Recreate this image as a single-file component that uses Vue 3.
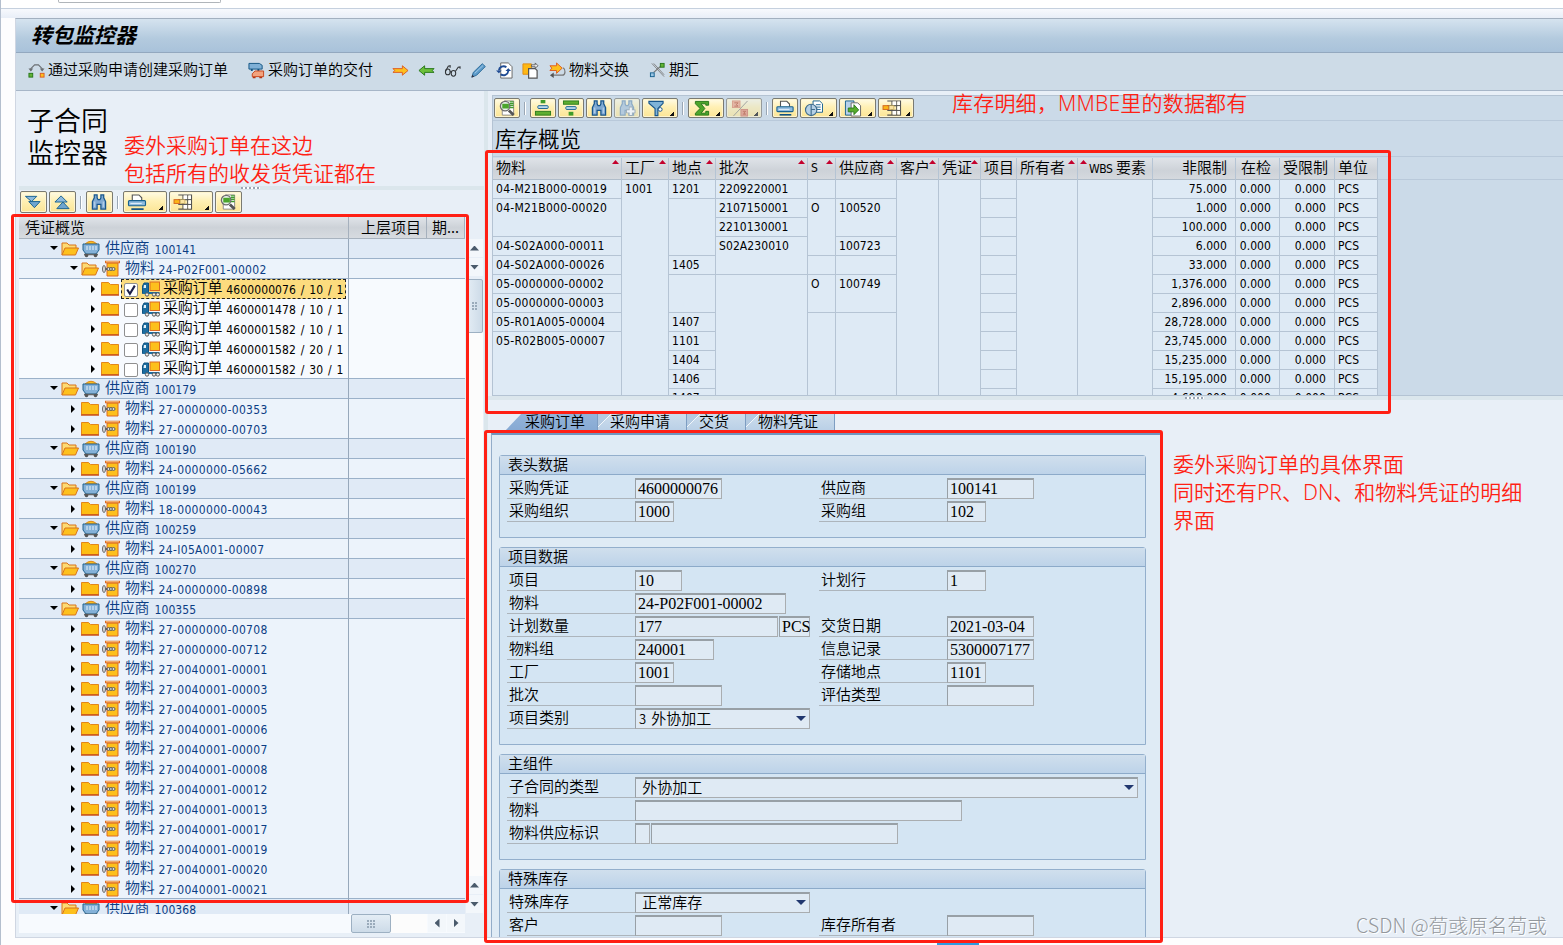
<template>
  <div class="screen">
    <!-- shared icon shapes -->
    <svg class="defs" width="0" height="0">
      <symbol id="i-find" viewBox="0 0 18 18">
        <path d="M6 1h10v15H4V9" fill="#fff" stroke="#8a8a8a" />
        <path d="M12 2h4M12 4h4M12 6h4M12 8h4" stroke="#3f9c2a" stroke-width="1.4" />
        <circle cx="7" cy="6.5" r="5" fill="#e9f3ea" stroke="#6d6d6d" stroke-width="1.4" />
        <rect x="4" y="4" width="7" height="5" fill="#4aa52c" />
        <path d="M11 11l5 5" stroke="#555" stroke-width="3" />
      </symbol>
      <symbol id="i-asc" viewBox="0 0 18 18">
        <rect x="6.5" y="0" width="5" height="3.5" fill="#3f9c2a" />
        <rect x="3.5" y="6" width="11" height="3" rx="1" fill="#b9d8ee" stroke="#17618f" />
        <rect x="1" y="12" width="16" height="4" fill="#5fae2f" stroke="#2c7d1d" />
      </symbol>
      <symbol id="i-desc" viewBox="0 0 18 18">
        <rect x="1" y="1" width="16" height="3.5" fill="#5fae2f" stroke="#2c7d1d" />
        <rect x="3.5" y="7" width="11" height="3" rx="1" fill="#b9d8ee" stroke="#17618f" />
        <rect x="6.5" y="12.5" width="5" height="4" fill="#3f9c2a" />
      </symbol>
      <symbol id="i-bino" viewBox="0 0 18 18">
        <path d="M4 1h3v3l1 2h2l1-2V1h3v3l2 4v8h-5v-5H7v5H2V8l2-4z" fill="#7fa9d2" stroke="#17558c" stroke-width="1.3" />
        <path d="M4.5 8v6M13.5 8v6" stroke="#c3dbf0" />
      </symbol>
      <symbol id="i-binoplus" viewBox="0 0 18 18">
        <path d="M4 1h3v3l1 2h2l1-2V1h3v3l2 4v8h-5v-5H7v5H2V8l2-4z" fill="#a9c3d8" stroke="#6c93b3" stroke-width="1.3" />
        <path d="M13 7v10M8 12h10" stroke="#8796a0" stroke-width="4" />
        <path d="M13 8v8M9 12h8" stroke="#fff" stroke-width="2.4" />
      </symbol>
      <symbol id="i-filter" viewBox="0 0 18 18">
        <path d="M1.5 1.5h15v2L11 9v7.5H8V9L1.5 3.5z" fill="#7fb3d8" stroke="#17558c" stroke-width="1.2" />
        <circle cx="13.5" cy="10" r="2" fill="#fff" stroke="#17558c" />
      </symbol>
      <symbol id="i-sum" viewBox="0 0 18 18">
        <path d="M2 1.5h14v4h-3V4H8l4 5-4 5h5v-2h3v4H2v-2l5-5-5-5z" fill="#4ea52b" stroke="#23761a" />
      </symbol>
      <symbol id="i-sub" viewBox="0 0 18 18">
        <rect x="1" y="1" width="8" height="7" fill="#f2a584" stroke="#e0845f" />
        <rect x="10" y="10" width="7" height="7" fill="#e88f72" stroke="#cf6f55" />
        <path d="M3 3h4L5 5l2 1.5H3M12 12h3l-2 2 2 1h-3" stroke="#b94a28" fill="none" />
        <path d="M17 1L2 17" stroke="#85857a" />
      </symbol>
      <symbol id="i-print" viewBox="0 0 20 18">
        <path d="M5 7V1h7l3 3v3" fill="#fff" stroke="#555" stroke-width="1.2" />
        <rect x="1" y="7" width="18" height="5.5" rx="1" fill="#8fbbdf" stroke="#17618f" stroke-width="1.2" />
        <path d="M3 10h12" stroke="#e6f2fb" />
        <path d="M4 16h13" stroke="#0f5285" stroke-width="1.8" />
      </symbol>
      <symbol id="i-views" viewBox="0 0 20 18">
        <path d="M9 1h7l3 3v9H9z" fill="#fff" stroke="#17618f" />
        <path d="M12 5h5M12 7.5h5M12 10h5" stroke="#17618f" />
        <circle cx="7" cy="10.5" r="6" fill="#b5d0e6" stroke="#3f6b8c" stroke-width="1.2" />
        <path d="M7 4.5v12M7 10h4" fill="none" stroke="#3f6b8c" stroke-width="1.2" />
      </symbol>
      <symbol id="i-export" viewBox="0 0 20 18">
        <path d="M2 1h9v15H2z" fill="#b8d1ea" stroke="#17618f" />
        <path d="M8 3h7l3 3v11H8z" fill="#fff" stroke="#666" />
        <path d="M5 8.5h6V5l5 5.5-5 5v-3H5z" fill="#58ac2c" stroke="#2a7a1c" />
      </symbol>
      <symbol id="i-layout" viewBox="0 0 20 18">
        <path d="M5 1h14v15H5M5 6h14M5 11h14M10 1v15M15 1v15" fill="none" stroke="#555" stroke-width="1.2" />
        <rect x="10.6" y="1.6" width="3.8" height="3.8" fill="#fff" />
        <rect x="15.6" y="1.6" width="2.8" height="3.8" fill="#fff" />
        <rect x="15.6" y="6.6" width="2.8" height="3.8" fill="#fff" />
        <rect x="10.6" y="11.6" width="3.8" height="3.8" fill="#fff" />
        <rect x="15.6" y="11.6" width="2.8" height="3.8" fill="#fff" />
        <rect x=".5" y="6" width="6" height="4" fill="#fbb616" stroke="#d4661f" />
        <rect x="7" y="6" width="5" height="4" fill="#fbe3a0" stroke="#b89d4d" stroke-width=".6" />
      </symbol>
      <symbol id="i-expand" viewBox="0 0 18 18">
        <path d="M1 2.5h12L7.5 8z" fill="#8db9dd" stroke="#17618f" />
        <path d="M4.500 8h12l-6 6.500z" fill="#6fa5cf" stroke="#17618f" />
      </symbol>
      <symbol id="i-collapse" viewBox="0 0 18 18">
        <path d="M1.500 8.500h13L8 2z" fill="#8db9dd" stroke="#17618f" />
        <path d="M3.500 15.500h13L10 8.500z" fill="#6fa5cf" stroke="#17618f" />
      </symbol>
      <symbol id="i-create" viewBox="0 0 18 18">
        <path d="M3 9V7l4-4h4l4 4v2" fill="none" stroke="#6b6f73" stroke-width="1.2" />
        <path d="M.5 7h5L3 10zM12.500 7h5L15 10z" fill="#6b6f73" />
        <rect x="1" y="12" width="4" height="4" fill="#62b235" stroke="#26761a" />
        <rect x="13" y="12" width="4" height="4" fill="#fdc01d" stroke="#dd5b22" />
      </symbol>
      <symbol id="i-deliver" viewBox="0 0 18 18">
        <path d="M1 1.500h11l3 2v4H1z" fill="#7fb0d6" stroke="#125483" />
        <path d="M3 8.500h2M10 8.500h2" stroke="#125483" stroke-width="2" />
        <path d="M16.500 9.500h-9l-3 3v3h12z" fill="#f2a27d" stroke="#c7431b" />
        <path d="M5 16.500h3M12 16.500h3" stroke="#b53412" stroke-width="1.5" />
      </symbol>
      <symbol id="i-right" viewBox="0 0 18 18">
        <path d="M1 7h10V4l6 5-6 5v-3H1l2-2z" fill="#fdc01d" stroke="#dd5b22" />
      </symbol>
      <symbol id="i-left" viewBox="0 0 18 18">
        <path d="M17 7H7V4L1 9l6 5v-3h10l-2-2z" fill="#6cc03a" stroke="#26761a" />
      </symbol>
      <symbol id="i-glasses" viewBox="0 0 18 18">
        <g fill="none" stroke="#2f3336" stroke-width="1.1">
          <ellipse cx="4" cy="10.500" rx="2.500" ry="3" />
          <ellipse cx="10" cy="12" rx="2.400" ry="3" />
          <path d="M1.500 10L4.500 4.500l2-.5v2M12 10l3-4.500 2-.3v2M6.500 10l1.500 1" />
        </g>
      </symbol>
      <symbol id="i-pencil" viewBox="0 0 18 18">
        <path d="M2 16l1.500-5L13 1.800l3.200 3L7 14z" fill="#5d9bcb" stroke="#2c6a97" />
        <path d="M5 12l9-8.500" stroke="#a5cbe6" />
        <path d="M1.500 16.500l1-3 2 2z" fill="#334" />
      </symbol>
      <symbol id="i-refresh" viewBox="0 0 18 18">
        <path d="M5 1h8l4 4v12H5z" fill="#fff" stroke="#666" />
        <path d="M3 9a5 5 0 0 1 8-3.500M13 9.500a5 5 0 0 1-8 3.500" fill="none" stroke="#1f4b93" stroke-width="2" />
        <path d="M0 9h6L3 12zM10 9.500h6L13 6.500z" fill="#1f4b93" />
      </symbol>
      <symbol id="i-copy" viewBox="0 0 18 18">
        <path d="M1 2h9v11H1z" fill="#fdb813" stroke="#e08a14" />
        <path d="M7 7h7l2 2v8H7z" fill="#fff" stroke="#555" stroke-width="1.3" />
        <path d="M10 5V3h4V1l3 3-3 2.500V5z" fill="#eee" stroke="#555" stroke-width=".9" />
      </symbol>
      <symbol id="i-exchange" viewBox="0 0 18 18">
        <path d="M1 4h7V1l6 5.500L8 12V9H1l2-2.500z" fill="#fdc01d" stroke="#dd5b22" />
        <path d="M15 6c3 2 2.500 8-1 8H3" fill="none" stroke="#777" stroke-width="1.3" />
        <path d="M1 14l4-3v6z" fill="#555" />
      </symbol>
      <symbol id="i-term" viewBox="0 0 18 18">
        <path d="M3 1.500l13 14M5 1.500l11 12" stroke="#777" stroke-width=".9" />
        <path d="M5 11l8-7" stroke="#777" stroke-width="1.3" />
        <rect x="12" y="1.500" width="4" height="4" fill="#62b235" stroke="#26761a" />
        <rect x="1.500" y="11.500" width="4" height="4" fill="#9ac5e4" stroke="#17618f" />
      </symbol>
      <symbol id="i-open" viewBox="0 0 18 16">
        <path d="M1 14V2h5l2 2h7v3" fill="#fddb74" stroke="#d8741d" />
        <path d="M1 14L4 7h13.500l-3 7z" fill="#fdc01d" stroke="#d8741d" />
      </symbol>
      <symbol id="i-folder" viewBox="0 0 18 16">
        <path d="M.5 13.500v-12h7l2 2h8v10z" fill="#fdbe14" stroke="#e3861b" />
        <path d="M0 14h18" stroke="#c9501b" stroke-width="1.5" />
      </symbol>
      <symbol id="i-vendor" viewBox="0 0 18 18">
        <path d="M3 4q6-5.500 12 0z" fill="#fdc01d" stroke="#e08a14" />
        <path d="M1 4h16v6l-3 4H4l-3-4z" fill="#84b1d8" stroke="#20628f" />
        <path d="M5 6v4M8 6v4M11 6v4M14 6v4" stroke="#e8f3fb" />
        <path d="M2 14.500h14" stroke="#666" stroke-width="1.5" />
        <circle cx="4.500" cy="15.500" r="1.8" fill="#555" />
        <circle cx="13.500" cy="15.500" r="1.8" fill="#555" />
      </symbol>
      <symbol id="i-material" viewBox="0 0 18 18">
        <path d="M5 3h11v13H5z" fill="#fdc01d" stroke="#dd6a22" />
        <path d="M3 2h15" stroke="#dd6a22" stroke-width="2.5" />
        <path d="M4 1.800h13" stroke="#fbc98c" />
        <ellipse cx="2" cy="9" rx="1.500" ry="3.500" fill="#ddd" stroke="#666" />
        <path d="M3 9h3" stroke="#666" stroke-width="2" />
        <g fill="#ddd" stroke="#555" stroke-width=".9">
          <circle cx="6.500" cy="9" r="1.500" />
          <circle cx="9" cy="9" r="1.500" />
          <circle cx="11.500" cy="9" r="1.500" />
        </g>
      </symbol>
      <symbol id="i-truck" viewBox="0 0 18 16">
        <rect x="8" y="1" width="9.500" height="8.500" fill="#fdc01d" stroke="#dd6a22" />
        <path d="M.5 12.500V5L2 2h4.500v10.500z" fill="#1d6c9f" stroke="#0f5280" />
        <path d="M2 4h2v3H1.500z" fill="#e3f1fa" />
        <path d="M1 12h16.500" stroke="#1d6c9f" stroke-width="2" />
        <g fill="#eee" stroke="#555">
          <circle cx="5" cy="13.500" r="1.700" />
          <circle cx="12" cy="13.500" r="1.700" />
          <circle cx="15.800" cy="13.500" r="1.700" />
        </g>
      </symbol>
    </svg>

    <div class="strip"><div class="cmd-field"></div></div>

    <div class="window">
      <div class="title-bar">转包监控器</div>
      <div class="app-bar">
        <span v-for="(b, i) in appButtons" :key="i" class="app-button" :style="{ width: b.w + 'px' }">
          <svg width="17" height="17"><use :href="'#i-' + b.icon" /></svg>
          <span v-if="b.label">{{ b.label }}</span>
        </span>
      </div>

      <div class="body">
        <div class="left">
          <div class="left-title"><div>子合同</div><div>监控器</div></div>
          <div class="h-split"><i class="grip"></i></div>
          <div class="tools left-tools">
            <template v-for="(b, i) in treeTools" :key="i">
              <i v-if="b.sep" class="sep"></i>
              <span v-else class="tool" :class="{ off: b.off }" :style="{ width: b.w + 'px' }">
                <svg :width="b.w > 30 ? 20 : 18" height="17"><use :href="'#i-' + b.icon" /></svg>
                <i v-if="b.w > 30" class="drop"></i>
              </span>
            </template>
          </div>
          <div class="tree-area">
            <div class="tree">
              <div class="tree-head">
                <span class="c1">凭证概览</span><span class="c2">上层项目</span><span class="c3">期...</span>
              </div>
              <div class="tree-body">
                <div v-for="(n, i) in nodes" :key="i" class="node" :class="['lv' + n.level, { line: hasLine(i) }]">
                  <div class="node-main" :class="{ selected: n.checked }">
                    <i class="arrow" :class="{ down: n.open }"></i>
                    <svg class="fold" width="18" height="16"><use :href="n.open ? '#i-open' : '#i-folder'" /></svg>
                    <span class="pick">
                      <span v-if="n.level === 2" class="check">
                        <svg v-if="n.checked" width="12" height="12" viewBox="0 0 11 11"><path d="M2 5l2.500 4L9 1.500" fill="none" stroke="#1b1f4a" stroke-width="1.9" /></svg>
                      </span>
                      <svg width="18" height="18"><use :href="'#i-' + kinds[n.level].icon" /></svg>
                      <span class="kind">{{ kinds[n.level].name }}</span>
                      <span class="node-id">{{ n.id }}</span>
                    </span>
                  </div>
                </div>
              </div>
              <div class="hscroll">
                <i class="thumb-h"></i><i class="rail"></i>
                <i class="sb"><b class="tri l"></b></i><i class="sb"><b class="tri r"></b></i>
              </div>
            </div>
            <div class="vscroll">
              <i class="sb"><b class="tri u"></b></i><i class="sb"><b class="tri d"></b></i>
              <i class="thumb-v"></i>
              <i class="rail-v"></i>
              <i class="sb"><b class="tri u"></b></i><i class="sb"><b class="tri d"></b></i>
            </div>
          </div>
        </div>

        <div class="v-split"></div>

        <div class="right">
          <div class="alv">
            <div class="tools alv-tools">
              <template v-for="(b, i) in alvTools" :key="i">
                <i v-if="b.sep" class="sep"></i>
                <span v-else class="tool" :class="{ off: b.off }" :style="{ width: b.w + 'px' }">
                  <svg :width="b.w > 30 ? 20 : 18" height="17"><use :href="'#i-' + b.icon" /></svg>
                  <i v-if="b.w > 30" class="drop"></i>
                </span>
              </template>
            </div>
            <div class="alv-title">库存概览</div>
            <div class="grid">
              <div v-for="c in columns" :key="c.name" class="col" :class="{ amount: c.right, material: c.material }" :style="{ width: c.w + 'px' }">
                <div class="th" :class="{ latin: c.name === 'S' }">
                  <span v-if="c.name === 'WBS'"><small>WBS</small> 要素</span>
                  <span v-else>{{ c.name }}</span>
                  <i v-if="c.sort" class="sort" :class="c.sort"></i>
                </div>
                <div v-for="(cell, j) in c.cells" :key="j" class="td" :style="{ height: cell[1] * 19 + 'px' }">{{ cell[0] }}</div>
              </div>
              <div class="grid-rest"><div class="rest-head"></div></div>
            </div>
          </div>
          <div class="h-split wide"><i class="grip"></i></div>

          <div class="tabs">
            <span v-for="(t, i) in tabs" :key="t.name" class="tab" :class="{ active: i === 0 }" :style="{ width: t.w + 'px' }">{{ t.name }}</span>
          </div>
          <div class="panel">
            <div v-for="g in groups" :key="g.title" class="group">
              <div class="group-title">{{ g.title }}</div>
              <div v-for="(r, i) in g.rows" :key="i" class="frow">
                <div v-for="(f, k) in r" :key="k" class="half">
                  <template v-if="f">
                    <span class="label">{{ f.label }}</span>
                    <span v-for="(x, m) in f.fields" :key="m" class="field" :class="{ select: x.select }" :style="{ width: x.w + 'px' }"><small v-if="x.pre">{{ x.pre }}</small>{{ x.v }}</span>
                  </template>
                </div>
              </div>
            </div>
          </div>
        </div>
      </div>
    </div>

    <!-- annotations drawn over the window -->
    <div class="box box-tree"></div>
    <div class="box box-grid"></div>
    <div class="box box-form"></div>
    <div class="note note-tree">委外采购订单在这边<br>包括所有的收发货凭证都在</div>
    <div class="note note-grid">库存明细，MMBE里的数据都有</div>
    <div class="note note-form">委外采购订单的具体界面<br>同时还有PR、DN、和物料凭证的明细<br>界面</div>
    <div class="task-hint"></div>
    <div class="watermark">CSDN @荀彧原名苟或</div>
  </div>
</template>

<script setup>
const appButtons = [
  { icon: 'create', label: '通过采购申请创建采购订单', w: 220 },
  { icon: 'deliver', label: '采购订单的交付', w: 144 },
  { icon: 'right', w: 26 },
  { icon: 'left', w: 26 },
  { icon: 'glasses', w: 26 },
  { icon: 'pencil', w: 26 },
  { icon: 'refresh', w: 26 },
  { icon: 'copy', w: 27 },
  { icon: 'exchange', label: '物料交换', w: 100 },
  { icon: 'term', label: '期汇', w: 60 }
]

const treeTools = [
  { icon: 'expand', w: 27 }, { icon: 'collapse', w: 27 }, { sep: true },
  { icon: 'bino', w: 27 }, { sep: true },
  { icon: 'print', w: 44 }, { icon: 'layout', w: 44 }, { icon: 'find', w: 27 }
]

const alvTools = [
  { icon: 'find', w: 26 }, { sep: true },
  { icon: 'asc', w: 26 }, { icon: 'desc', w: 26 }, { icon: 'bino', w: 26 },
  { icon: 'binoplus', w: 26, off: true }, { icon: 'filter', w: 36 }, { sep: true },
  { icon: 'sum', w: 36 }, { icon: 'sub', w: 36, off: true }, { sep: true },
  { icon: 'print', w: 26 }, { icon: 'views', w: 37 }, { icon: 'export', w: 37 }, { icon: 'layout', w: 36 }
]

const kinds = [
  { name: '供应商', icon: 'vendor' },
  { name: '物料', icon: 'material' },
  { name: '采购订单', icon: 'truck' }
]

const vendor = (id) => ({ level: 0, id, open: true })
const material = (id, open = false) => ({ level: 1, id, open })
const order = (id, checked = false) => ({ level: 2, id, checked })

const nodes = [
  vendor('100141'),
  material('24-P02F001-00002', true),
  order('4600000076 / 10 / 1', true),
  order('4600001478 / 10 / 1'),
  order('4600001582 / 10 / 1'),
  order('4600001582 / 20 / 1'),
  order('4600001582 / 30 / 1'),
  vendor('100179'),
  material('27-0000000-00353'),
  material('27-0000000-00703'),
  vendor('100190'),
  material('24-0000000-05662'),
  vendor('100199'),
  material('18-0000000-00043'),
  vendor('100259'),
  material('24-I05A001-00007'),
  vendor('100270'),
  material('24-0000000-00898'),
  vendor('100355'),
  ...['27-0000000-00708', '27-0000000-00712', '27-0040001-00001', '27-0040001-00003',
    '27-0040001-00005', '27-0040001-00006', '27-0040001-00007', '27-0040001-00008',
    '27-0040001-00012', '27-0040001-00013', '27-0040001-00017', '27-0040001-00019',
    '27-0040001-00020', '27-0040001-00021'].map((id) => material(id)),
  vendor('100368')
]

// a line separates rows of different levels
const hasLine = (i) => i + 1 < nodes.length && nodes[i].level !== nodes[i + 1].level

const fill = (v, n = 12) => Array.from({ length: n }, () => [v, 1])
const single = (list) => list.map((v) => [v, 1])

// cells are [text, number of merged rows]
const columns = [
  { name: '物料', w: 129, sort: 'r', material: true, cells: [['04-M21B000-00019', 1], ['04-M21B000-00020', 2], ['04-S02A000-00011', 1], ['04-S02A000-00026', 1], ['05-0000000-00002', 1], ['05-0000000-00003', 1], ['05-R01A005-00004', 1], ['05-R02B005-00007', 5]] },
  { name: '工厂', w: 47, sort: 'r', cells: [['1001', 13]] },
  { name: '地点', w: 47, sort: 'r', cells: [['1201', 1], ['', 3], ['1405', 1], ['', 2], ['1407', 1], ['1101', 1], ['1404', 1], ['1406', 1], ['1407', 1]] },
  { name: '批次', w: 92, sort: 'r', cells: [['2209220001', 1], ['2107150001', 1], ['2210130001', 1], ['S02A230010', 2], ['', 8]] },
  { name: 'S', w: 28, sort: 'r', cells: [['', 1], ['O', 3], ['', 1], ['O', 2], ['', 6]] },
  { name: '供应商', w: 61, sort: 'r', cells: [['', 1], ['100520', 2], ['100723', 1], ['', 1], ['100749', 2], ['', 6]] },
  { name: '客户', w: 42, sort: 'r', cells: [['', 13]] },
  { name: '凭证', w: 42, sort: 'r', cells: [['', 13]] },
  { name: '项目', w: 36, cells: fill('') },
  { name: '所有者', w: 61, sort: 'r', cells: [['', 13]] },
  { name: 'WBS', w: 75, sort: 'l', cells: [['', 13]] },
  { name: '非限制', w: 83, right: true, cells: single(['75.000', '1.000', '100.000', '6.000', '33.000', '1,376.000', '2,896.000', '28,728.000', '23,745.000', '15,235.000', '15,195.000', '4,698.000']) },
  { name: '在检', w: 44, right: true, cells: fill('0.000') },
  { name: '受限制', w: 55, right: true, cells: fill('0.000') },
  { name: '单位', w: 43, cells: fill('PCS') }
]

const tabs = [
  { name: '采购订单', w: 93 },
  { name: '采购申请', w: 89 },
  { name: '交货', w: 59 },
  { name: '物料凭证', w: 89 }
]

const f = (label, ...fields) => ({ label, fields })

const groups = [
  {
    title: '表头数据',
    rows: [
      [f('采购凭证', { v: '4600000076', w: 87 }), f('供应商', { v: '100141', w: 87 })],
      [f('采购组织', { v: '1000', w: 39 }), f('采购组', { v: '102', w: 39 })]
    ]
  },
  {
    title: '项目数据',
    rows: [
      [f('项目', { v: '10', w: 47 }), f('计划行', { v: '1', w: 39 })],
      [f('物料', { v: '24-P02F001-00002', w: 151 }), null],
      [f('计划数量', { v: '177', w: 143 }, { v: 'PCS', w: 31 }), f('交货日期', { v: '2021-03-04', w: 87 })],
      [f('物料组', { v: '240001', w: 79 }), f('信息记录', { v: '5300007177', w: 87 })],
      [f('工厂', { v: '1001', w: 39 }), f('存储地点', { v: '1101', w: 39 })],
      [f('批次', { v: '', w: 87 }), f('评估类型', { v: '', w: 87 })],
      [f('项目类别', { pre: '3', v: '外协加工', w: 175, select: true }), null]
    ]
  },
  {
    title: '主组件',
    rows: [
      [f('子合同的类型', { v: ' 外协加工', w: 503, select: true })],
      [f('物料', { v: '', w: 327 })],
      [f('物料供应标识', { v: '', w: 15 }, { v: '', w: 247 })]
    ]
  },
  {
    title: '特殊库存',
    rows: [
      [f('特殊库存', { v: ' 正常库存', w: 175, select: true }), null],
      [f('客户', { v: '', w: 87 }), f('库存所有者', { v: '', w: 87 })]
    ]
  }
]
</script>

<style>
body {
  margin: 0;
  overflow: hidden;
}
</style>

<style scoped>
* {
  box-sizing: border-box;
}

i, b {
  font-style: normal;
  display: block;
  flex: none;
}

svg {
  flex: none;
  display: block;
}

.screen {
  position: relative;
  width: 1563px;
  height: 945px;
  overflow: hidden;
  background: #fdfdfe;
  border-left: 1px solid #b4bfce;
  font-family: "Noto Sans CJK SC", sans-serif;
  font-size: 15px;
  font-weight: 350;
  color: #000;
  white-space: nowrap;
}

.defs {
  position: absolute;
}

.strip {
  height: 18px;
  background: linear-gradient(#fff 8px, #c5d0de 8px, #c5d0de 9px, #f7f9fd 9px, #e8eef7);
}

.cmd-field {
  width: 163px;
  height: 3px;
  margin-left: 57px;
  border: 1px solid #b0b5ba;
  border-top: 0;
  border-radius: 0 0 2px 2px;
}

.window {
  margin-left: 14px;
  height: 920px;
  display: flex;
  flex-direction: column;
  border: 1px solid #cfd6e2;
  border-top-color: #a2b0c0;
  border-right: 0;
  background: #e8eff7;
}

.title-bar {
  height: 34px;
  line-height: 30px;
  padding-left: 15px;
  border-bottom: 1px solid #93a8bf;
  background: linear-gradient(#d5e3ef, #b3cade 60%, #a9c2da);
  font-size: 21px;
  font-weight: 700;
  font-style: italic;
}

.app-bar {
  height: 38px;
  display: flex;
  align-items: center;
  padding: 0 0 3px 12px;
  border-bottom: 1px solid #a7b6c8;
  background: #cddbe7;
  line-height: 20px;
}

.app-button {
  display: flex;
  align-items: center;
  gap: 3px;
  flex: none;
}

.app-button span {
  padding-bottom: 2px;
}

.body {
  flex: 1;
  min-height: 0;
  display: flex;
}

.left {
  width: 468px;
  flex: none;
  display: flex;
  flex-direction: column;
  padding-left: 3px;
}

.left-title {
  height: 95px;
  padding: 13px 0 0 8px;
  font-size: 27px;
  line-height: 32px;
}

.h-split {
  height: 4px;
  flex: none;
  background: #dbe6ec;
  display: flex;
  align-items: center;
}

.grip {
  width: 19px;
  height: 2px;
  margin-left: 222px;
  background: repeating-linear-gradient(90deg, #9aa5b4 0 2px, #fff 2px 4px);
}

.h-split.wide .grip {
  margin-left: 697px;
}

.v-split {
  width: 4px;
  flex: none;
  background: #dbe6ec;
}

.tools {
  display: flex;
  align-items: center;
  gap: 2px;
}

.left-tools {
  height: 27px;
  padding: 0 0 3px 1px;
}

.sep {
  width: 2px;
  height: 13px;
  margin: 0 2px;
  background: #9aa7b5;
  border-right: 1px solid #fff;
}

.tool {
  height: 22px;
  flex: none;
  display: flex;
  align-items: center;
  justify-content: space-between;
  padding: 0 3px;
  border: 1px solid #7a7a72;
  border-radius: 2px;
  background: linear-gradient(#fffbe6, #fff0b4 45%, #fbe596);
  box-shadow: inset 0 0 0 1px #fff5cf;
}

.tool.off {
  opacity: .65;
}

.drop {
  width: 4px;
  height: 4px;
  margin-top: 11px;
  background: linear-gradient(135deg, transparent 48%, #111 50%);
}

.tree-area {
  flex: 1;
  min-height: 0;
  display: flex;
}

.tree {
  width: 446px;
  flex: none;
}

.tree-head {
  height: 22px;
  line-height: 19px;
  display: flex;
  border-bottom: 1px solid #a8b3bf;
  background: linear-gradient(#e0e4e9, #cdd2d8 50%, #d7dbe0);
}

.tree-head span {
  border-right: 1px solid #a5b0bd;
}

.c1 {
  width: 330px;
  padding-left: 6px;
}

.c2 {
  width: 78px;
  padding-left: 12px;
}

.c3 {
  width: 38px;
  padding-left: 5px;
}

.tree-body {
  height: 675px;
  overflow: hidden;
}

.node {
  height: 20px;
  border-bottom: 1px solid transparent;
}

.node.line {
  border-bottom-color: #9bb1c9;
}

.lv0 {
  background-color: #e0eaf6;
}

.lv1 {
  background-color: #ecf3fb;
}

.lv2 {
  background-color: #f7fafe;
}

.node-main {
  width: 330px;
  height: 20px;
  display: flex;
  align-items: center;
  border-right: 1px solid #97a8bb;
  color: #0b3d84;
}

.lv2 .node-main {
  color: #000;
}

.lv0 .node-main {
  padding-left: 27px;
}

.lv1 .node-main {
  padding-left: 47px;
}

.lv2 .node-main {
  padding-left: 67px;
}

.arrow {
  width: 15px;
  height: 8px;
  background: #000;
  clip-path: polygon(5px 0, 9px 4px, 5px 8px);
}

.arrow.down {
  clip-path: polygon(4px 1px, 12px 1px, 8px 5px);
}

.pick {
  height: 20px;
  display: flex;
  align-items: center;
  padding-left: 3px;
  flex: none;
  line-height: 16px;
}

.lv2 .pick {
  margin-left: 2px;
  padding: 0 1px 0 1px;
  border: 1px dashed transparent;
}

.selected .pick {
  background: #fcdc7e;
  border-color: #222;
}

.check {
  width: 14px;
  height: 14px;
  margin: 1px 4px 0 1px;
  border: 1px solid #8f8f8f;
  border-radius: 2px;
  background: #fff;
}

.kind {
  margin-left: 5px;
  padding-bottom: 4px;
  letter-spacing: -.2px;
}

.lv2 .kind {
  margin-left: 3px;
}

.node-id {
  margin: 1px 0 0 5px;
  letter-spacing: .12px;
}

.lv1 .node-id {
  margin-left: 4px;
  letter-spacing: .32px;
}

.lv2 .node-id {
  margin-left: 4px;
  word-spacing: 1.2px;
}

.node-id, .td {
  font-family: "DejaVu Sans Condensed", "DejaVu Sans", sans-serif;
  font-stretch: condensed;
  font-size: 12px;
  font-weight: 400;
}

.hscroll {
  height: 19px;
  display: flex;
  justify-content: flex-end;
  background: #f7fafe;
}

.hscroll .rail {
  width: 36px;
  background: #fcfcfc;
}

.thumb-h, .thumb-v {
  display: flex;
  align-items: center;
  justify-content: center;
  border: 1px solid #9db0c2;
  border-radius: 2px;
  background: linear-gradient(#e4edf5, #cddbe8);
}

.thumb-h::before, .thumb-v::before {
  content: "";
  width: 8px;
  height: 8px;
  background: radial-gradient(circle at 1px 1px, #9aabbb 1px, transparent 1.2px);
  background-size: 3px 3px;
}

.thumb-v::before {
  width: 6px;
  height: 9px;
}

.thumb-h {
  width: 40px;
}

.thumb-v {
  height: 54px;
  margin-top: 2px;
  background: linear-gradient(90deg, #e4edf5, #cddbe8);
}

.sb {
  width: 18px;
  height: 18px;
  margin: 0 0 1px 1px;
  display: flex;
  align-items: center;
  justify-content: center;
  background: #f3f7fb;
}

.tri {
  width: 9px;
  height: 5px;
  background: #4b5b6c;
}

.tri.u {
  clip-path: polygon(0 5px, 9px 5px, 4.5px 0);
}

.tri.d {
  clip-path: polygon(0 0, 9px 0, 4.5px 5px);
}

.tri.l, .tri.r {
  width: 5px;
  height: 9px;
}

.tri.l {
  clip-path: polygon(5px 0, 5px 9px, 0 4.5px);
}

.tri.r {
  clip-path: polygon(0 0, 0 9px, 5px 4.5px);
}

.vscroll {
  width: 17px;
  height: 697px;
  margin-left: 1px;
  padding-top: 22px;
  display: flex;
  flex-direction: column;
}

.vscroll .sb {
  width: 17px;
  margin-left: 0;
}

.vscroll .rail-v {
  flex: 1;
  background: #fcfcfc;
}

.right {
  flex: 1;
  min-width: 0;
  display: flex;
  flex-direction: column;
  padding-top: 4px;
}

.alv {
  height: 301px;
  flex: none;
  overflow: hidden;
  margin-left: 4px;
  border: solid #b4c3d3;
  border-width: 1px 0 1px 1px;
  background: #cbdae8;
}

.alv-tools {
  height: 25px;
  padding: 0 0 0 1px;
  border-bottom: 1px solid #b9c9da;
}

.alv-tools .tool {
  height: 20px;
}

.alv-title {
  height: 36px;
  padding-left: 2px;
  border-bottom: 1px solid #b9c9da;
  font-size: 21.5px;
  line-height: 34px;
}

.grid {
  display: flex;
  padding-top: 1px;
}

.col {
  flex: none;
  border-right: 1px solid #b5c4d4;
  background: #deeaf5;
}

.th {
  position: relative;
  height: 22px;
  line-height: 18px;
  padding-left: 3px;
  border-bottom: 1px solid #b0bdca;
  background: linear-gradient(#dfe3e8, #cdd2d8 60%, #d5d9de);
}

.th small {
  margin-left: 8px;
  font-family: "DejaVu Sans Condensed", sans-serif;
  font-size: 12px;
  letter-spacing: -.4px;
}

.th.latin {
  font-family: "DejaVu Sans Condensed", sans-serif;
  font-size: 12px;
  line-height: 21px;
}

.amount .th {
  padding-right: 8px;
  text-align: right;
}

.sort {
  position: absolute;
  top: 2px;
  width: 7px;
  height: 4px;
  background: #c4002c;
  clip-path: polygon(0 4px, 7px 4px, 3.5px 0);
}

.sort.r {
  right: 2px;
}

.sort.l {
  left: 2px;
}

.td {
  line-height: 18px;
  padding-left: 3px;
  border-bottom: 1px solid #b5c4d4;
  letter-spacing: .08px;
}

.material .td {
  letter-spacing: .26px;
}

.amount .td {
  padding-right: 8px;
  text-align: right;
}

.grid-rest {
  flex: 1;
}

.rest-head {
  height: 22px;
  border-bottom: 1px solid #b9c9da;
}

.tabs {
  height: 31px;
  flex: none;
  padding: 12px 0 0 17px;
  display: flex;
}

.tab {
  height: 19px;
  line-height: 17px;
  padding-left: 12px;
  border-right: 1px solid #7d9dc2;
  background: linear-gradient(135deg, #b4cae1 10px, #f2f7fb 10px, #f2f7fb 11px, transparent 11px), linear-gradient(#cfdfed, #b9cfe6);
}

.tab.active {
  padding-left: 20px;
  background: linear-gradient(#95b5da, #86a9d3);
  clip-path: polygon(18px 0, 100% 0, 100% 100%, 0 100%);
}

.panel {
  width: 672px;
  flex: 1;
  min-height: 0;
  overflow: hidden;
  margin-left: 3px;
  margin-top: 2px;
  padding: 20px 17px 0 7px;
  border-top: 2px solid #6f95bf;
  border-left: 1px solid #93adc9;
  background: #dfebf5;
}

.group {
  padding-bottom: 13px;
  margin-bottom: 9px;
  border: 1px solid #93afcc;
  border-radius: 3px 3px 0 0;
  background: #d4e5f3;
}

.group-title {
  height: 19px;
  line-height: 15px;
  margin-bottom: 3px;
  padding-left: 8px;
  border-bottom: 1px solid #8caac9;
  background: linear-gradient(#d0dfed, #bdd3e9);
}

.frow {
  height: 23px;
  display: flex;
  padding-left: 7px;
}

.half {
  width: 312px;
  flex: none;
  display: flex;
}

.label {
  width: 128px;
  height: 21px;
  line-height: 18px;
  flex: none;
  padding-left: 2px;
  border-bottom: 1px solid #adb5bc;
}

.field {
  height: 21px;
  line-height: 18px;
  flex: none;
  margin-right: 1px;
  padding-left: 2px;
  border: 1px solid #a9adb0;
  border-top: 2px solid #98a0a6;
  border-left-color: #98a0a6;
  background: #dfeaf4;
  font-family: "Liberation Serif", "Noto Sans CJK SC", serif;
  font-size: 16px;
  white-space: pre;
}

.field.select {
  position: relative;
  line-height: 15px;
  padding-left: 3px;
  font-family: "Noto Sans CJK SC", sans-serif;
  font-size: 15px;
}

.field.select::after {
  content: "";
  position: absolute;
  right: 3px;
  top: 6px;
  width: 10px;
  height: 5px;
  background: #22386f;
  clip-path: polygon(0 0, 100% 0, 50% 100%);
}

.field small {
  font-size: 13px;
  margin-right: 5px;
}

.box {
  position: absolute;
  border: 3px solid #ff1f14;
  border-radius: 3px;
}

.box-tree {
  left: 10px;
  top: 214px;
  width: 458px;
  height: 689px;
}

.box-grid {
  left: 484px;
  top: 150px;
  width: 906px;
  height: 264px;
}

.box-form {
  left: 483px;
  top: 430px;
  width: 679px;
  height: 513px;
}

.note {
  position: absolute;
  color: #ff1f14;
  font-family: "Noto Sans", "Noto Sans CJK SC", sans-serif;
  font-size: 21px;
  line-height: 28px;
}

.note-tree {
  left: 123px;
  top: 131px;
}

.note-grid {
  left: 951px;
  top: 89px;
  letter-spacing: .2px;
}

.note-form {
  left: 1172px;
  top: 450px;
}

.task-hint {
  position: absolute;
  left: 936px;
  top: 943px;
  width: 42px;
  height: 2px;
  background: #2f9be0;
}

.watermark {
  position: absolute;
  left: 1355px;
  top: 912px;
  font-size: 19.7px;
  font-weight: 300;
  line-height: 26px;
  color: #94989d;
  text-shadow: 1px 1px 0 #fff;
}
</style>
